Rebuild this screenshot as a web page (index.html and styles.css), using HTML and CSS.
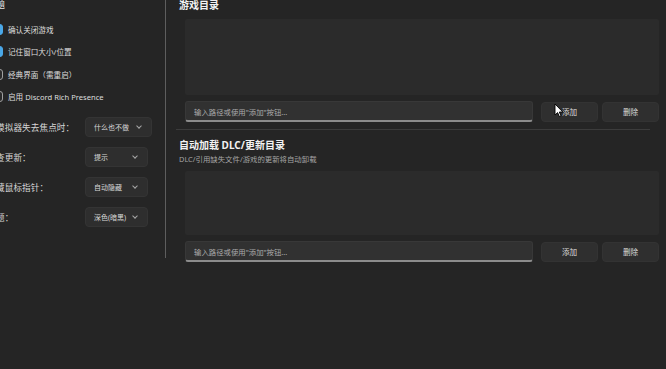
FILE: index.html
```html
<!DOCTYPE html>
<html>
<head>
  <meta charset="utf-8">
  <title>设置</title>
  <link rel="stylesheet" href="styles.css">
</head>
<body>
  <div class="sidebar">
    <div class="side-title">题</div>

    <div class="checks">
      <label class="check-row"><span class="box checked"></span>确认关闭游戏</label>
      <label class="check-row"><span class="box checked"></span>记住窗口大小/位置</label>
      <label class="check-row"><span class="box"></span>经典界面（需重启）</label>
      <label class="check-row"><span class="box"></span>启用 Discord Rich Presence</label>
    </div>

    <div class="options">
      <div class="option-row">
        <span class="option-label">模拟器失去焦点时：</span>
        <div class="select select-wide">什么也不做<span class="chevron"></span></div>
      </div>
      <div class="option-row">
        <span class="option-label">查更新：</span>
        <div class="select">提示<span class="chevron"></span></div>
      </div>
      <div class="option-row">
        <span class="option-label">藏鼠标指针：</span>
        <div class="select">自动隐藏<span class="chevron"></span></div>
      </div>
      <div class="option-row">
        <span class="option-label">题：</span>
        <div class="select">深色(暗黑)<span class="chevron"></span></div>
      </div>
    </div>
  </div>

  <div class="main">
    <div class="section">
      <div class="section-title">游戏目录</div>
      <div class="dir-list dir-list-tall"></div>
      <div class="path-row">
        <div class="path-input">输入路径或使用"添加"按钮...</div>
        <button class="btn">添加</button>
        <button class="btn">删除</button>
      </div>
    </div>

    <div class="separator"></div>

    <div class="section">
      <div class="section-title">自动加载 DLC/更新目录</div>
      <div class="section-desc">DLC/引用缺失文件/游戏的更新将自动卸载</div>
      <div class="dir-list"></div>
      <div class="path-row">
        <div class="path-input">输入路径或使用"添加"按钮...</div>
        <button class="btn">添加</button>
        <button class="btn">删除</button>
      </div>
    </div>
  </div>

  <svg class="cursor" width="10" height="15" viewBox="0 0 10 15" aria-hidden="true">
    <path d="M1 1 L1 12 L3.6 9.6 L5.4 13.6 L7 12.9 L5.3 9 L8.8 9 Z" fill="#fff" stroke="#000" stroke-width="0.9" stroke-linejoin="round"/>
  </svg>
</body>
</html>
```

FILE: styles.css
```css
* {
  box-sizing: border-box;
  margin: 0;
  padding: 0;
}

body {
  font-family: 'Noto Sans', 'Noto Sans CJK SC', sans-serif;
  font-size: 8px;
  color: #dcdcdc;
  background: #252525;
  width: 666px;
  height: 369px;
  overflow: hidden;
  display: flex;
  align-items: flex-start;
  position: relative;
}

/* left column, scrolled so its left edge is cut off */
.sidebar {
  width: 166px;
  height: 258px;
  flex-shrink: 0;
  overflow: hidden;
  border-right: 1px solid #5e5e5e;
}

.side-title {
  margin: -3px 0 0 -5px;
  height: 14px;
  line-height: 14px;
  font-size: 10px;
  color: #e8e8e8;
}

.checks {
  margin-top: 7px;
  display: flex;
  flex-direction: column;
}

.check-row {
  height: 22.5px;
  display: flex;
  align-items: center;
  gap: 5px;
  font-size: 7.6px;
  color: #dedede;
}

.box {
  width: 10px;
  height: 11px;
  margin-left: -7px;
  border-radius: 3px;
  border: 1px solid #a0a0a0;
  background: #2a2a2a;
  flex-shrink: 0;
}

.box.checked {
  border-color: #4aa8e8;
  background: #4aa8e8;
}

.options {
  margin-top: 4px;
  display: flex;
  flex-direction: column;
}

.option-row {
  height: 30px;
  display: flex;
  align-items: center;
}

.option-label {
  width: 89px;
  margin-left: -4px;
  flex-shrink: 0;
  font-size: 8.6px;
  letter-spacing: 0.1px;
  color: #d6d6d6;
  white-space: nowrap;
}

.select {
  width: 63px;
  height: 20px;
  padding: 0 10px 0 8px;
  display: flex;
  align-items: center;
  justify-content: space-between;
  background: #2e2e2e;
  border: 1px solid #343434;
  border-radius: 4px;
  font-size: 7px;
  color: #d8d8d8;
}

.select-wide {
  width: 67px;
}

.chevron {
  width: 4px;
  height: 4px;
  margin-top: -2px;
  border-right: 1px solid #a8a8a8;
  border-bottom: 1px solid #a8a8a8;
  transform: rotate(45deg);
}

/* right column */
.main {
  flex: 1;
  display: flex;
  flex-direction: column;
}

.section {
  padding: 0 7px 0 19px;
  display: flex;
  flex-direction: column;
}

.section-title {
  margin-left: -6px;
  height: 12px;
  line-height: 12px;
  margin-top: -1px;
  font-size: 10px;
  font-weight: 700;
  color: #f2f2f2;
}

.section:last-child .section-title {
  margin-top: 9px;
}

.section-desc {
  margin: 3px 0 0 -6px;
  height: 11px;
  line-height: 11px;
  font-size: 7.4px;
  color: #a4a4a4;
}

.dir-list {
  height: 64px;
  margin-top: 6px;
  background: #2b2b2b;
  border-radius: 2px;
}

.dir-list-tall {
  height: 76px;
  margin-top: 8px;
}

.path-row {
  margin-top: 6px;
  height: 21px;
  display: flex;
  align-items: center;
  gap: 4px;
}

.path-input {
  width: 348px;
  height: 21px;
  margin-right: 4px;
  padding: 0 8px;
  display: flex;
  align-items: center;
  background: #313131;
  border: 1px solid #383838;
  border-bottom: 2px solid #8c8c8c;
  border-radius: 3px;
  font-size: 7.4px;
  color: #ababab;
}

.btn {
  width: 57px;
  height: 20px;
  background: #2f2f2f;
  border: 1px solid #333;
  border-radius: 4px;
  font-family: inherit;
  font-size: 7.6px;
  color: #dcdcdc;
}

.separator {
  height: 1px;
  margin: 7px 16px 0 10px;
  background: #3c3c3c;
}

.cursor {
  position: absolute;
  left: 554px;
  top: 103px;
}
```
